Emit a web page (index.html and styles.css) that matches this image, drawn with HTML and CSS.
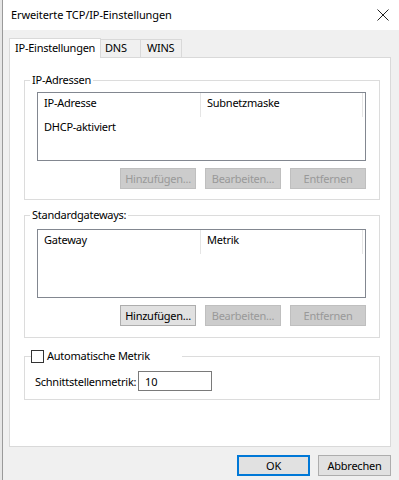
FILE: index.html
```html
<!DOCTYPE html>
<html lang="de">
<head>
    <meta charset="UTF-8">
    <title>Erweiterte TCP/IP-Einstellungen</title>
    <link rel="stylesheet" href="styles.css">
</head>
<body>
    <div class="window">
        <div class="titlebar">
            <span class="title">Erweiterte TCP/IP-Einstellungen</span>
            <svg class="close" width="12" height="12" viewBox="0 0 12 12">
                <path d="M0.5 0.5 L11.5 11.5 M11.5 0.5 L0.5 11.5" stroke="#222" stroke-width="1" fill="none"/>
            </svg>
        </div>
        <div class="body">
            <div class="tabs">
                <div class="tab active">IP-Einstellungen</div>
                <div class="tab">DNS</div>
                <div class="tab">WINS</div>
            </div>
            <div class="panel">
                <fieldset class="group">
                    <legend>IP-Adressen</legend>
                    <div class="listview">
                        <div class="lv-head">
                            <div class="col col-a">IP-Adresse</div>
                            <div class="col col-b">Subnetzmaske</div>
                        </div>
                        <div class="lv-row">DHCP-aktiviert</div>
                    </div>
                    <div class="buttons">
                        <button class="btn" disabled>Hinzufügen...</button>
                        <button class="btn" disabled>Bearbeiten...</button>
                        <button class="btn" disabled>Entfernen</button>
                    </div>
                </fieldset>

                <fieldset class="group gateways">
                    <legend>Standardgateways:</legend>
                    <div class="listview">
                        <div class="lv-head">
                            <div class="col col-a">Gateway</div>
                            <div class="col col-b">Metrik</div>
                        </div>
                    </div>
                    <div class="buttons">
                        <button class="btn">Hinzufügen...</button>
                        <button class="btn" disabled>Bearbeiten...</button>
                        <button class="btn" disabled>Entfernen</button>
                    </div>
                </fieldset>

                <fieldset class="group metric">
                    <legend>
                        <label class="check"><span class="box"></span>Automatische Metrik</label>
                    </legend>
                    <div class="field">
                        <label for="ifmetric">Schnittstellenmetrik:</label>
                        <input type="text" id="ifmetric" value="10">
                    </div>
                </fieldset>
            </div>
            <div class="footer">
                <button class="btn dlg default">OK</button>
                <button class="btn dlg">Abbrechen</button>
            </div>
        </div>
    </div>
</body>
</html>
```

FILE: styles.css
```css
* {
    box-sizing: border-box;
}
html, body {
    margin: 0;
    padding: 0;
    height: 100%;
}
body {
    font-family: 'Noto Sans', 'Open Sans', sans-serif;
    font-size: 11px;
    letter-spacing: -0.25px;
    color: #000;
    background-color: #e6e6e6;
    padding-left: 2px;
    overflow: hidden;
}
.window {
    height: 480px;
    border-left: 1px solid #9a9a9a;
    display: flex;
    flex-direction: column;
    background-color: #f0f0f0;
}
.titlebar {
    height: 30px;
    flex-shrink: 0;
    background-color: #fff;
    display: flex;
    align-items: center;
    justify-content: space-between;
    padding: 0 10px 1px 8px;
}
.title {
    letter-spacing: -0.1px;
}
.close {
    margin-top: 1px;
}
.body {
    flex: 1;
    padding: 8px 8px 0 6px;
    display: flex;
    flex-direction: column;
}
.tabs {
    display: flex;
    height: 19px;
    align-items: flex-end;
    position: relative;
    z-index: 1;
    white-space: nowrap;
}
.tab {
    height: 18px;
    line-height: 16px;
    padding: 0 4px;
    border: 1px solid #d9d9d9;
    border-bottom: none;
    background-color: #f0f0f0;
    margin-left: -1px;
}
.tab.active {
    height: 20px;
    line-height: 18px;
    background-color: #fff;
    margin-left: 0;
    margin-bottom: -1px;
    padding: 0 5px;
    width: 92px;
}
.tab:nth-child(2) {
    width: 41px;
}
.tab:nth-child(3) {
    width: 42px;
    padding-left: 6px;
}
.panel {
    height: 390px;
    background-color: #fff;
    border: 1px solid #d9d9d9;
    padding: 15px 10px 0 14px;
}
.group {
    margin: 0;
    border: 1px solid #dcdcdc;
    padding: 5px 13px 10px 12px;
}
.group legend {
    line-height: 14px;
    padding: 0 2px;
    margin-left: -7px;
}
.gateways {
    margin-top: 8px;
    padding-bottom: 11px;
}
.gateways .listview {
    margin-top: 2px;
}
.listview {
    height: 69px;
    border: 1px solid #828790;
    background-color: #fff;
}
.lv-head {
    display: flex;
    height: 24px;
}
.col {
    padding-left: 6px;
    line-height: 20px;
    border-right: 1px solid #e5e5e5;
}
.col-a {
    width: 163px;
}
.col-b {
    width: 162px;
}
.lv-row {
    padding-left: 6px;
    line-height: 20px;
}
.buttons {
    display: flex;
    justify-content: flex-end;
    gap: 9px;
    margin-top: 7px;
}
.btn {
    font-family: inherit;
    font-size: 11px;
    letter-spacing: -0.25px;
    height: 21px;
    width: 76px;
    padding: 0;
    background-color: #e1e1e1;
    border: 1px solid #adadad;
    color: #000;
    white-space: nowrap;
}
.btn:disabled {
    background-color: #cccccc;
    border-color: #bfbfbf;
    color: #999;
}
.metric {
    margin-top: 11px;
    padding: 8px 10px 8px 10px;
}
.metric legend {
    width: 151px;
    margin-left: -4px;
    padding: 0;
}
.check {
    display: flex;
    align-items: center;
    gap: 3px;
}
.box {
    width: 13px;
    height: 13px;
    border: 1px solid #333;
    background-color: #fff;
}
.field {
    display: flex;
    align-items: center;
    white-space: nowrap;
}
.field label {
    width: 103px;
}
.field input {
    font-family: inherit;
    font-size: 11px;
    width: 74px;
    height: 20px;
    border: 1px solid #7a7a7a;
    padding: 0 6px;
    margin: 0;
}
.footer {
    display: flex;
    justify-content: flex-end;
    gap: 8px;
    margin-top: 8px;
}
.btn.dlg {
    width: 73px;
}
.btn.default {
    border: 2px solid #0078d7;
}
```
